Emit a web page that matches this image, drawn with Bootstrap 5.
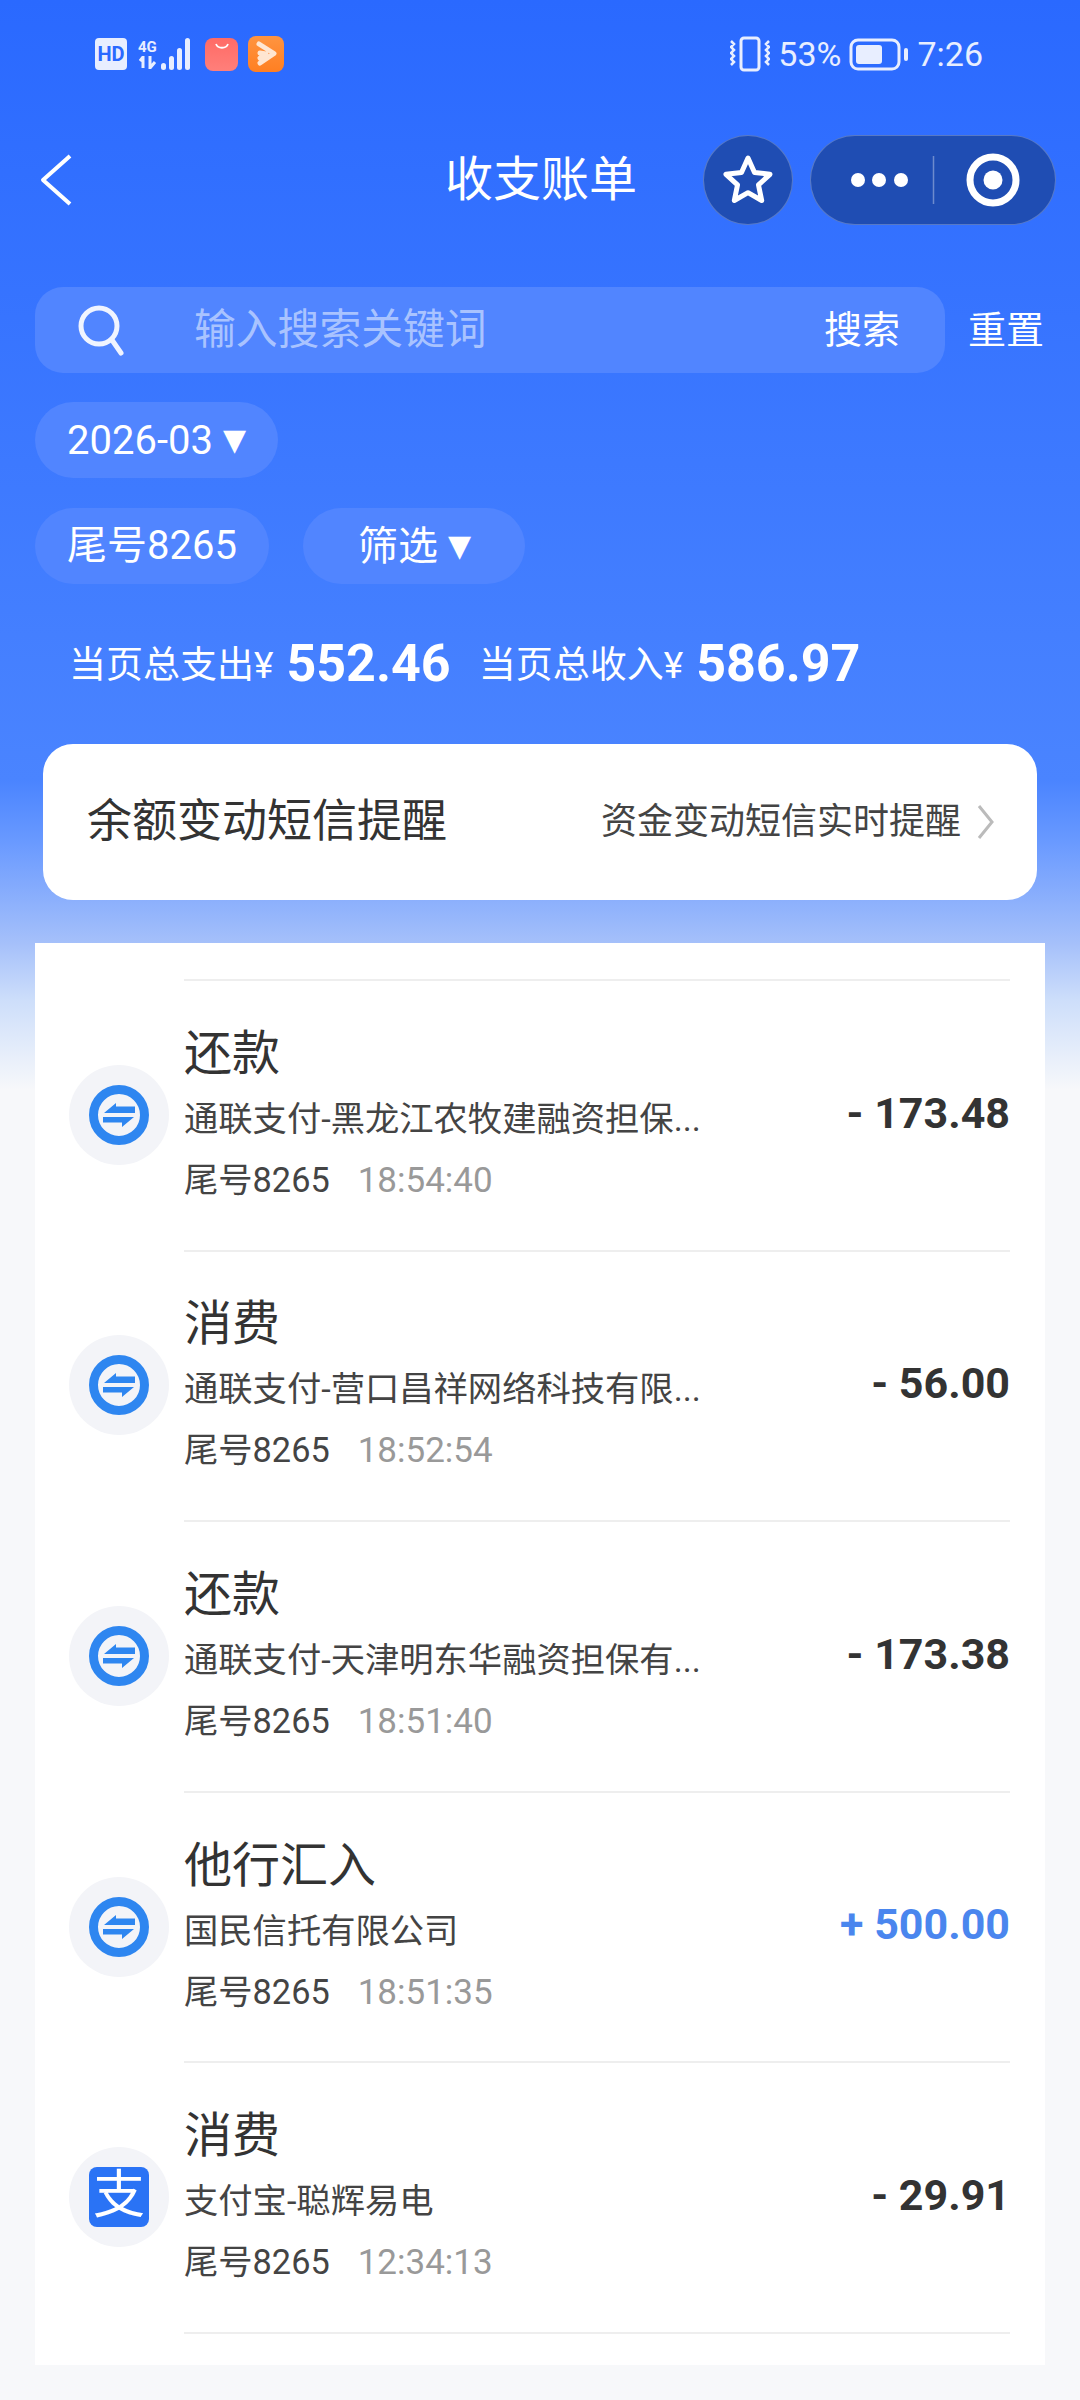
<!DOCTYPE html>
<html lang="zh">
<head>
    <meta charset="UTF-8">
    <meta name="viewport" content="width=device-width, initial-scale=1">
    <title>收支账单</title>
    <link href="https://cdn.jsdelivr.net/npm/bootstrap@5.3.0/dist/css/bootstrap.min.css" rel="stylesheet">
    <style>
        body { width: 1080px; height: 2400px; overflow: hidden; color: #333; font-family: Roboto, "Noto Sans CJK SC", sans-serif; background: #f7f8fa; }
        .screen { height: 2400px; padding-top: 36px; background: linear-gradient(180deg, #2a69ff 0, #4a84ff 780px, #6a9aff 843px, #a5c0fa 943px, #cddefa 1000px, #f7f8fa 1090px); }

        .status-bar { height: 36px; padding: 0 97px 0 95px; color: #e8eeff; font-size: 34px; }
        .hd-tag { width: 32px; height: 32px; background: #e8eeff; color: #2a69ff; border-radius: 4px; font-size: 20px; font-weight: 700; line-height: 32px; text-align: center; }
        .net-tag { font-size: 15px; font-weight: 700; line-height: 16px; margin: 0 2px 0 11px; width: 20px; }
        .app-red { width: 33px; height: 33px; border-radius: 8px; background: linear-gradient(180deg, #ff6b66, #ff7f7a); margin-left: 11px; }
        .app-orange { width: 36px; height: 36px; border-radius: 8px; background: linear-gradient(180deg, #ff9440, #ff7f22); margin-left: 10px; }

        .nav-row { height: 90px; margin-top: 63px; padding: 0 24px 0 40px; }
        .nav-title { margin-left: 373px; width: 192px; font-size: 48px; line-height: 90px; white-space: nowrap; color: #fff; }
        .round-btn { width: 90px; height: 90px; margin-left: 66px; background: #1f4db3; border: 1px solid rgba(255,255,255,.25); border-radius: 50%; }
        .capsule-btn { width: 246px; height: 90px; margin-left: 17px; background: #1f4db3; border: 1px solid rgba(255,255,255,.25); border-radius: 45px; }

        .search-row { margin-top: 62px; padding-left: 35px; }
        .search-box { width: 910px; height: 86px; border-radius: 28px; background: #5185ff; padding: 0 45px 0 42px; }
        .search-hint { margin-left: 69px; font-size: 41.8px; color: #a9c3ff; }
        .search-act { font-size: 38px; color: #fff; }
        .reset-act { margin-left: 23px; font-size: 38px; color: #fff; }

        .pill-row { padding-left: 35px; gap: 34px; color: #fff; font-size: 40px; }
        .date-row { margin-top: 29px; }
        .filter-row { margin-top: 30px; }
        .chip { height: 76px; padding: 0 32px; background: #5185ff; border-radius: 38px; line-height: 76px; white-space: nowrap; }
        .chip-filter { padding: 0 54px 0 55px; }
        .tri { font-size: 30px; vertical-align: 4px; margin-left: 10px; font-family: "DejaVu Sans", sans-serif; }

        .totals { margin-top: 45px; padding-left: 69px; height: 70px; color: #fff; font-size: 37px; line-height: 70px; white-space: nowrap; }
        .totals b { font-size: 52px; margin: 0 28px 0 13px; vertical-align: -3px; }

        .sms-card { width: 994px; height: 156px; margin: 45px 0 0 43px; padding: 0 42px 0 44px; background: #fff; border-radius: 30px; }
        .sms-title { font-size: 45px; }
        .sms-note { font-size: 36px; color: #444; }

        .bill-panel { width: 1010px; height: 1422px; margin: 43px 0 0 35px; padding-top: 36px; background: #fff; }
        .top-rule { height: 2px; margin: 0 35px 0 149px; background: #eee; }
        .bill-row { height: 270.6px; }
        .bill-icon { width: 100px; height: 100px; margin: 0 15px 3px 34px; background: #f3f4f8; border-radius: 50%; }
        .alipay-box { width: 60px; height: 60px; background: #2a73f5; color: #fff; border-radius: 8px; font-size: 52px; font-weight: 400; line-height: 58px; text-align: center; }
        .bill-body { margin-right: 35px; border-bottom: 2px solid #eee; }
        .bill-title { font-size: 48px; line-height: 70px; }
        .bill-sub { font-size: 34.3px; line-height: 60px; color: #444; white-space: nowrap; }
        .bill-tail { line-height: 62px; }
        .bill-time { margin-left: 28px; font-size: 35px; color: #999; }
        .bill-amt { margin-bottom: 5px; font-size: 43px; font-weight: 700; white-space: nowrap; }
        .amt-in { color: #4a86ee; }
    </style>
</head>
<body>

<div class="screen">
    <!-- Barra de estado -->
    <div class="status-bar d-flex align-items-center justify-content-between">
        <div class="d-flex align-items-center">
            <div class="hd-tag">HD</div>
            <div class="net-tag">4G<br>
                <svg class="d-block" width="20" height="14" viewBox="0 0 20 14"><path d="M5 1v12M2 6l3-4M12 1v12l5-6" fill="none" stroke="#e8eeff" stroke-width="3"/></svg>
            </div>
            <svg width="34" height="36" viewBox="0 0 34 36"><g fill="#e8eeff"><rect x="1" y="27" width="5" height="7" rx="2.5"/><rect x="9" y="20" width="5" height="14" rx="2.5"/><rect x="17" y="12" width="5" height="22" rx="2.5"/><rect x="25" y="2" width="5" height="32" rx="2.5"/></g></svg>
            <div class="app-red d-flex justify-content-center">
                <svg width="18" height="14" viewBox="0 0 18 14"><path d="M3 6c2 5 10 5 12 0" fill="none" stroke="#fff" stroke-width="1.8"/></svg>
            </div>
            <div class="app-orange d-flex align-items-center justify-content-center">
                <svg width="24" height="26" viewBox="0 0 24 26"><path d="M5 3l15 9.500L6 22M6 12l6 1-6 4" fill="none" stroke="#ffe6d2" stroke-width="5" stroke-linecap="round" stroke-linejoin="round"/></svg>
            </div>
        </div>
        <div class="d-flex align-items-center">
            <svg width="40" height="38" viewBox="0 0 40 38"><rect x="11" y="3" width="18" height="32" rx="3" fill="none" stroke="#e8eeff" stroke-width="3"/><path d="M1 6l3 3-3 3 3 3-3 3 3 3-3 3 3 3-3 3M39 6l-3 3 3 3-3 3 3 3-3 3 3 3-3 3 3 3" fill="none" stroke="#e8eeff" stroke-width="2.500"/></svg>
            <span class="ms-2">53%</span>
            <svg class="ms-2" width="60" height="34" viewBox="0 0 60 34"><rect x="2" y="3" width="48" height="29" rx="7" fill="none" stroke="#e8eeff" stroke-width="3"/><rect x="7" y="8" width="26" height="19" rx="3" fill="#e8eeff"/><rect x="55" y="11" width="4" height="13" rx="2" fill="#e8eeff"/></svg>
            <span class="ms-2">7:26</span>
        </div>
    </div>

    <!-- Navegación -->
    <div class="nav-row d-flex align-items-center">
        <svg width="32" height="52" viewBox="0 0 32 52"><path d="M30 2L3 26l27 24" fill="none" stroke="#fff" stroke-width="4" stroke-linejoin="round"/></svg>
        <div class="nav-title">收支账单</div>
        <div class="round-btn d-flex align-items-center justify-content-center">
            <svg width="54" height="54" viewBox="0 0 54 54"><path d="M27 5l6.500 14.500 15.500 1.800-11.500 10.600 3.200 15.600L27 39.700l-13.700 7.800 3.200-15.600L5 21.300l15.500-1.800z" fill="none" stroke="#fff" stroke-width="5" stroke-linejoin="round"/></svg>
        </div>
        <div class="capsule-btn">
            <svg width="244" height="88" viewBox="0 0 244 88"><g fill="#fff"><circle cx="47" cy="44" r="7"/><circle cx="68" cy="44" r="7"/><circle cx="90" cy="44" r="7"/></g><path d="M122.500 20v48" stroke="rgba(255,255,255,.35)" stroke-width="1.500"/><circle cx="182" cy="44" r="23" fill="none" stroke="#fff" stroke-width="7"/><circle cx="182" cy="44" r="9.500" fill="#fff"/></svg>
        </div>
    </div>

    <!-- Búsqueda -->
    <div class="search-row d-flex align-items-center">
        <div class="search-box d-flex align-items-center">
            <svg width="48" height="52" viewBox="0 0 48 52"><circle cx="22" cy="22" r="18" fill="none" stroke="#f0f4ff" stroke-width="5"/><path d="M35 36l9 13" stroke="#f0f4ff" stroke-width="5" stroke-linecap="round"/></svg>
            <span class="search-hint flex-grow-1">输入搜索关键词</span>
            <span class="search-act">搜索</span>
        </div>
        <span class="reset-act">重置</span>
    </div>

    <!-- Filtros -->
    <div class="pill-row d-flex date-row">
        <div class="chip">2026-03<span class="tri">▼</span></div>
    </div>
    <div class="pill-row d-flex filter-row">
        <div class="chip">尾号8265</div>
        <div class="chip chip-filter">筛选<span class="tri">▼</span></div>
    </div>

    <div class="totals">当页总支出¥<b>552.46</b>当页总收入¥<b>586.97</b></div>

    <div class="sms-card d-flex align-items-center justify-content-between">
        <span class="sms-title">余额变动短信提醒</span>
        <div class="d-flex align-items-center">
            <span class="sms-note">资金变动短信实时提醒</span>
            <svg class="ms-3" width="18" height="36" viewBox="0 0 18 36"><path d="M2 2l13 16L2 34" fill="none" stroke="#bbb" stroke-width="3"/></svg>
        </div>
    </div>

    <!-- Lista de movimientos -->
    <div class="bill-panel">
        <div class="top-rule"></div>
        <div id="bill-list"></div>
    </div>
</div>

<script>
    const bills = [
        { tipo: "还款", detalle: "通联支付-黑龙江农牧建融资担保...", hora: "18:54:40", monto: "- 173.48", icono: "union" },
        { tipo: "消费", detalle: "通联支付-营口昌祥网络科技有限...", hora: "18:52:54", monto: "- 56.00", icono: "union" },
        { tipo: "还款", detalle: "通联支付-天津明东华融资担保有...", hora: "18:51:40", monto: "- 173.38", icono: "union" },
        { tipo: "他行汇入", detalle: "国民信托有限公司", hora: "18:51:35", monto: "+ 500.00", icono: "union", entrada: true },
        { tipo: "消费", detalle: "支付宝-聪辉易电", hora: "12:34:13", monto: "- 29.91", icono: "alipay" }
    ];

    const unionIcon = `<svg width="60" height="60" viewBox="0 0 60 60"><circle cx="30" cy="30" r="25.500" fill="none" stroke="#2e86f0" stroke-width="9"/><path d="M46 21.500H27V18L15 28h31zM14 32h31L33 42v-4.500H14z" fill="#2e86f0"/></svg>`;
    const alipayIcon = `<div class="alipay-box">支</div>`;

    const list = document.getElementById("bill-list");
    bills.forEach(bill => {
        const row = document.createElement("div");
        row.className = "bill-row d-flex align-items-center";
        row.innerHTML = `
            <div class="bill-icon d-flex flex-shrink-0 align-items-center justify-content-center">${bill.icono === "alipay" ? alipayIcon : unionIcon}</div>
            <div class="bill-body h-100 flex-grow-1 d-flex align-items-center justify-content-between">
                <div>
                    <div class="bill-title">${bill.tipo}</div>
                    <div class="bill-sub">${bill.detalle}</div>
                    <div class="bill-sub bill-tail">尾号8265<span class="bill-time">${bill.hora}</span></div>
                </div>
                <div class="bill-amt ${bill.entrada ? "amt-in" : ""}">${bill.monto}</div>
            </div>`;
        list.appendChild(row);
    });
</script>
<script src="https://cdn.jsdelivr.net/npm/bootstrap@5.3.0/dist/js/bootstrap.bundle.min.js"></script>
</body>
</html>
